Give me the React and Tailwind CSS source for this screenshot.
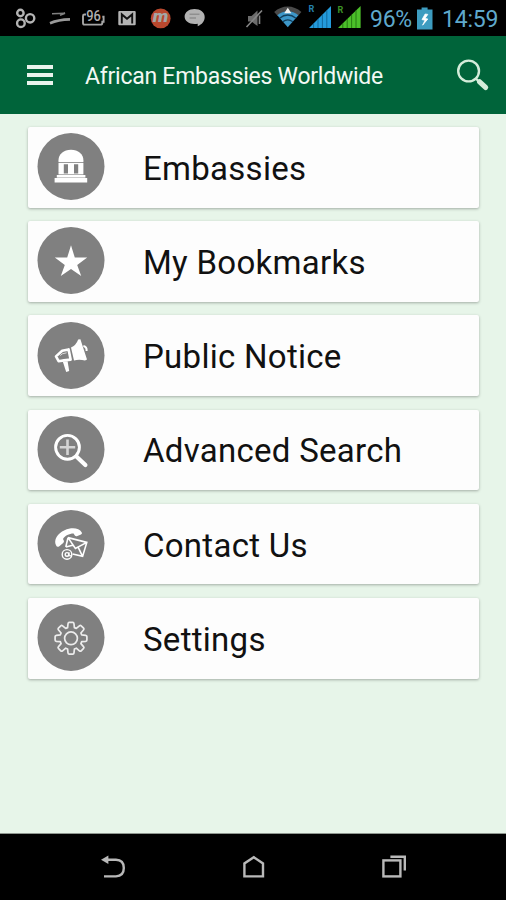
import React from 'react';

const StatusIcons = () => (
  <svg width="210" height="36" viewBox="0 0 210 36" fill="none">
    {/* linked circles */}
    <g stroke="#b4b4b4" strokeWidth="2.4">
      <circle cx="20.4" cy="13" r="3.2" />
      <circle cx="30.1" cy="18.3" r="4.2" />
      <circle cx="20.9" cy="23.2" r="3.8" />
    </g>
    {/* swoosh */}
    <path d="M52 13.8 65 13.2 60 15.4" stroke="#808080" strokeWidth="1.5" />
    <path d="M50 23.2C56 20.6 62 19.6 70 19.4" stroke="#9a9a9a" strokeWidth="2.6" />
    {/* battery percent */}
    <path d="M86 14.5H84.5Q83 14.5 83 16V23Q83 24.6 84.5 24.6H100.5Q102.3 24.6 102.3 23V21.8H103.6V16.8H102.3" stroke="#a6a6a6" strokeWidth="1.9" />
    <text x="86.2" y="21.4" textLength="14.6" lengthAdjust="spacingAndGlyphs" fill="#b0b0b0" fontFamily="Roboto, sans-serif" fontWeight="500" fontSize="14">96</text>
    {/* gmail */}
    <rect x="118.3" y="11" width="17.4" height="14.3" rx="1" fill="#b4b4b4" />
    <path d="M121.8 23.6V14.4L127 18.8 132.2 14.4V23.6" stroke="#111111" strokeWidth="1.9" />
    {/* m badge */}
    <circle cx="160.7" cy="18.4" r="9.9" fill="#b9482e" />
    <text x="152.8" y="22.4" textLength="15.6" lengthAdjust="spacingAndGlyphs" fill="#a4a6a6" fontFamily="Roboto, sans-serif" fontStyle="italic" fontWeight="900" fontSize="16">m</text>
    {/* chat bubble */}
    <path d="M194.5 9C200.5 9 204.7 12.5 204.7 17 204.7 21.4 202 24.3 197.7 26.3V23.8C190 25 184.6 21.6 184.6 16.6 184.6 12.4 188.8 9 194.5 9Z" fill="#b2b2b2" />
    <path d="M189.5 14.3H199.5M189.5 18.1H196" stroke="#8f8f8f" strokeWidth="1.5" />
  </svg>
);

const SignalIcons = () => (
  <svg width="126" height="36" viewBox="240 0 126 36" fill="none">
    {/* muted sound */}
    <path d="M248 16H251.5L257.5 10.5V26L251.5 21.5H248Z" fill="#6c6c6c" />
    <path d="M246.5 27 262 10.5M259.5 15.5V24" stroke="#858585" strokeWidth="1.6" />
    {/* wifi */}
    <path d="M274.2 12C282 4.6 293.4 4.6 301.4 12L297.8 16C291.5 10 284 10 277.8 16Z" fill="#4a4a4a" />
    <path d="M277.3 15.3C283.5 9.9 292 9.9 298.4 15.3L287.8 27.3Z" fill="#3d97c9" />
    <path d="M279.5 18.2Q287.8 11.8 296 18.2M282.8 21.8Q287.8 18 292.8 21.8" stroke="#123f5c" strokeWidth="1.3" />
    <path d="M287.8 7.8 291.4 13.3H284.2Z" fill="#f2f2f2" />
    {/* sim 1 */}
    <path d="M309 28 331 6V28Z" fill="#249bdc" />
    <path d="M313.6 23.5V28M318 19V28M322.4 14.6V28M326.8 10.2V28" stroke="#0e5c8c" strokeWidth="0.8" />
    <text x="308.6" y="12.4" fill="#2680ad" fontFamily="Roboto, sans-serif" fontWeight="700" fontSize="9">R</text>
    {/* sim 2 */}
    <path d="M338 28 360.6 6V28Z" fill="#4cc02a" />
    <path d="M342.8 23.5V28M347.2 19V28M351.6 14.6V28M356 10.2V28" stroke="#1d6b0d" strokeWidth="0.8" />
    <text x="337.6" y="12.8" fill="#3d9226" fontFamily="Roboto, sans-serif" fontWeight="700" fontSize="9">R</text>
  </svg>
);

const BatteryIcon = () => (
  <svg width="16" height="23" viewBox="0 0 16 23">
    <path d="M4.6 0.5H10.6V2.5H15.5V22.5H0V2.5H4.6Z" fill="#3d9cc0" />
    <path d="M8.2 7 5 12.6 8 13.2 5.6 18.2 10.8 12 8 11.4 10.8 7.4Z" fill="#ffffff" stroke="#ffffff" strokeWidth="0.8" />
  </svg>
);

const EmbassyIcon = () => (
  <g fill="#ffffff">
    <path d="M21.5 30V28.2C21.5 22 26.8 17.8 34 17.8S46.4 22 46.4 28.2V30Z" />
    <path d="M21.5 30.8H46.4V42.4H21.5Z" />
    <path d="M19.8 43H48.4V45.6H19.8Z" />
    <path d="M17.6 46H50.2V50.4H17.6Z" />
    <path d="M26.8 32.3H31V41.6H26.8ZM37 32.3H41.2V41.6H37Z" fill="#808080" />
  </g>
);

const StarIcon = () => (
  <path fill="#ffffff" d="M34 19.2 37.8 31.6H50.2L40.2 39 44.2 50 34 43 23.8 50 27.8 39 17.8 31.6H30.2Z" />
);

const MegaphoneIcon = () => (
  <g>
    <path d="M34 26.4Q39 24.4 41.2 18.4L43.4 18.2 50 38.6 48 39.6Q42.5 38 37 39.4Z" fill="#ffffff" />
    <path d="M31.6 28.4 25.2 29.8 19 35.4 21.6 40.2 27 39.4 33.6 38.6Z" fill="none" stroke="#ffffff" strokeWidth="2.6" strokeLinejoin="round" />
    <path d="M23.2 34.6 25.4 32.8 29.6 31.8" fill="none" stroke="#ffffff" strokeWidth="0.7" />
    <path d="M25.8 40.6 30.6 40.2 32.2 50 29.2 51Z" fill="#ffffff" />
    <path d="M46.4 25Q50 25.8 49.6 30" fill="none" stroke="#ffffff" strokeWidth="2" />
  </g>
);

const ZoomIcon = () => (
  <g fill="none">
    <circle cx="30.5" cy="32.3" r="11.9" stroke="#ffffff" strokeWidth="2.9" />
    <path d="M39.4 41.4 48.4 50" stroke="#ffffff" strokeWidth="4.2" strokeLinecap="round" />
    <path d="M30.5 24.6V40M22.8 32.3H38.2" stroke="#d4d4d4" strokeWidth="2.6" />
  </g>
);

const ContactIcon = () => (
  <g fill="none" stroke="#ffffff">
    <path d="M19 36.2C16.4 31 20.4 24.2 27.6 21.2C34.4 18.2 42 18.6 44.8 23.4Q45.4 24.8 44 25.6L39.8 27.2Q38 27.6 37.2 25.6L36.6 24.6C32 24.6 28 27 26 30L26.8 31.4Q27.4 32.8 26.2 34L22 37.4Q20 38.4 19 36.2Z" fill="#ffffff" stroke="none" />
    <path d="M31 28.6 49.8 33.4 45.6 47.4 35.6 45M31 28.6 28.8 38M31 28.6 38.4 39.4 49.8 33.4M28.8 38 35.6 36.2M41.2 38.4 45.6 47.4" strokeWidth="1.6" />
    <circle cx="30" cy="45.4" r="4.8" strokeWidth="1.4" />
    <circle cx="30" cy="45.4" r="1.8" strokeWidth="1.4" />
    <path d="M32 43.2V46.6Q33.4 47.6 34.8 45.8" strokeWidth="1.2" />
  </g>
);

const GearIcon = () => (
  <g fill="none" stroke="#ececec" strokeWidth="1.7" strokeLinejoin="round">
    <circle cx="34" cy="35.3" r="6.4" />
    {/* 8 teeth */}
    <path d="M32.2 19.4H35.8Q36.8 19.4 37 20.8L37.4 24.6 39.3 25.4 42.4 22.8Q43.4 22 44.2 22.8L46.6 25.2Q47.4 26 46.5 27L43.9 30 44.7 31.9 48.6 32.3Q49.9 32.5 49.9 33.5V37.1Q49.9 38.1 48.6 38.3L44.7 38.7 43.9 40.6 46.5 43.6Q47.4 44.6 46.6 45.4L44.2 47.8Q43.4 48.6 42.4 47.8L39.3 45.2 37.4 46 37 49.8Q36.8 51.2 35.8 51.2H32.2Q31.2 51.2 31 49.8L30.6 46 28.7 45.2 25.6 47.8Q24.6 48.6 23.8 47.8L21.4 45.4Q20.6 44.6 21.5 43.6L24.1 40.6 23.3 38.7 19.4 38.3Q18.1 38.1 18.1 37.1V33.5Q18.1 32.5 19.4 32.3L23.3 31.9 24.1 30 21.5 27Q20.6 26 21.4 25.2L23.8 22.8Q24.6 22 25.6 22.8L28.7 25.4 30.6 24.6 31 20.8Q31.2 19.4 32.2 19.4Z" />
  </g>
);

const menuItems = [
  { label: 'Embassies', icon: EmbassyIcon },
  { label: 'My Bookmarks', icon: StarIcon },
  { label: 'Public Notice', icon: MegaphoneIcon },
  { label: 'Advanced Search', icon: ZoomIcon },
  { label: 'Contact Us', icon: ContactIcon },
  { label: 'Settings', icon: GearIcon },
];

const MenuCard = ({ label, icon: Icon }) => (
  <button className="flex h-[80.6px] w-full shrink-0 items-center rounded-[2px] bg-[#fdfdfd] pb-[2px] pl-[9px] text-left shadow-[0_1px_3px_rgba(0,0,0,0.3)]">
    <svg width="68" height="68" viewBox="0 0 68 68" className="shrink-0">
      <circle cx="34" cy="34.4" r="33.5" fill="#808080" />
      <Icon />
    </svg>
    <span className="ml-[38px] whitespace-nowrap pt-[4px] text-[33px] leading-none tracking-[0.28px] text-[#111111]">{label}</span>
  </button>
);

const App = () => {
  return (
    <div className="flex h-[900px] w-[506px] flex-col overflow-hidden bg-[#e7f5e9] font-[Roboto,sans-serif]">
      {/* Status bar */}
      <div className="flex h-9 shrink-0 items-center bg-black text-[#5fa9cc]">
        <StatusIcons />
        <div className="ml-[30px] flex items-center">
          <SignalIcons />
          <span className="ml-[4px] w-[41px] whitespace-nowrap pt-[2px] text-[23px] leading-none tracking-[-0.3px]">96%</span>
          <span className="ml-[6px]"><BatteryIcon /></span>
          <span className="ml-[9px] whitespace-nowrap pt-[2px] text-[23px] leading-none tracking-[-0.2px]">14:59</span>
        </div>
      </div>

      {/* App bar */}
      <header className="flex h-[78px] shrink-0 items-center bg-[#00643a] pl-[27px] pr-[16px]">
        <div className="flex w-[26px] flex-col gap-1">
          <div className="h-1 bg-[#e9f3ec]"></div>
          <div className="h-1 bg-[#e9f3ec]"></div>
          <div className="h-1 bg-[#e9f3ec]"></div>
        </div>
        <h1 className="ml-8 whitespace-nowrap pt-[2px] text-[23px] leading-none tracking-[-0.25px] text-[#f2f9f4]">African Embassies Worldwide</h1>
        <svg width="34" height="34" viewBox="0 0 34 34" fill="none" className="ml-auto">
          <circle cx="12.6" cy="13" r="10.4" stroke="#d4edda" strokeWidth="2.4" />
          <path d="M19.6 20.4 23 23.6" stroke="#d4edda" strokeWidth="2.2" />
          <path d="M23.6 23.8 29.6 29.4" stroke="#d4edda" strokeWidth="5.2" strokeLinecap="round" />
        </svg>
      </header>

      {/* Menu */}
      <main className="flex flex-1 flex-col gap-[13.6px] pl-7 pr-[27px] pt-[13px]">
        {menuItems.map((item) => (
          <MenuCard key={item.label} label={item.label} icon={item.icon} />
        ))}
      </main>

      {/* Navigation bar */}
      <nav className="flex h-[67px] shrink-0 items-center justify-between border-t border-[#8f9790] bg-black pl-[100px] pr-[98px]">
        <svg width="26" height="26" viewBox="0 0 26 26" fill="none" stroke="#b9b9b9" strokeWidth="2.4">
          <path d="M6 5.8H16Q23.8 6 23.8 14T16 22.4H4" />
          <path d="M1 5.8 8.4 1.6V10Z" fill="#b9b9b9" stroke="none" />
        </svg>
        <svg width="24" height="26" viewBox="0 0 24 26" fill="none" stroke="#b9b9b9" strokeWidth="2.4">
          <path d="M2.4 22.4V9.4L11.8 3.2 21 9.4V22.4Z" />
        </svg>
        <svg width="26" height="26" viewBox="0 0 26 26" fill="none" stroke="#b9b9b9" strokeWidth="2.4">
          <rect x="1.4" y="6.4" width="17" height="16" />
          <path d="M8.4 2.8H22.8V16.4" />
        </svg>
      </nav>
    </div>
  );
};

export default App;
